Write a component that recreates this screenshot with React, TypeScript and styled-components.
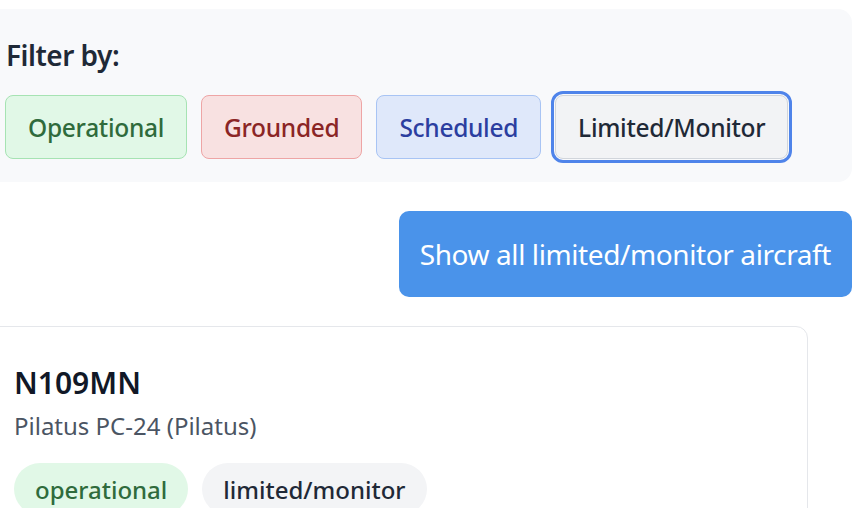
import styled, { createGlobalStyle } from "styled-components"

const GlobalStyle = createGlobalStyle`
    html, body {
        margin: 0;
        padding: 0;
        background: #ffffff;
        overflow: hidden;
    }
    body {
        font-family: "Noto Sans", "Open Sans", sans-serif;
        color: #1f2937;
    }
`

const tones = {
    operational: { bg: "#e1f8e7", border: "#a6e3b3", text: "#2f6b3c" },
    grounded: { bg: "#f8e1e1", border: "#eea5a5", text: "#8b2525" },
    scheduled: { bg: "#dfe8fa", border: "#a8c4f4", text: "#2b3ea0" },
    limited: { bg: "#f2f3f5", border: "#d1d5db", text: "#1f2937" },
}

type Tone = keyof typeof tones

const Page = styled.div`
    width: 867px;
    margin-left: -15px;
    padding-top: 9px;
`

const FilterPanel = styled.section`
    background: #f8f9fb;
    border-radius: 14px;
    padding: 28px 20px 23px;
`

const FilterTitle = styled.h3`
    margin: 0 0 22px 1px;
    font-size: 28px;
    line-height: 36px;
    letter-spacing: -0.5px;
    font-weight: 600;
    color: #1f2937;
`

const FilterRow = styled.div`
    display: flex;
    gap: 14px;
`

const FilterButton = styled.button<{ $tone: Tone; $active?: boolean }>`
    height: 64px;
    padding: 0 22px;
    border-radius: 8px;
    border: 1px solid ${(p) => tones[p.$tone].border};
    background: ${(p) => tones[p.$tone].bg};
    color: ${(p) => tones[p.$tone].text};
    font-family: inherit;
    font-size: 24.5px;
    letter-spacing: -0.3px;
    font-weight: 500;
    outline: ${(p) => (p.$active ? "3px solid #4f84ea" : "none")};
    outline-offset: 1px;
    cursor: pointer;
`

const ActionRow = styled.div`
    display: flex;
    justify-content: flex-end;
    margin-top: 29px;
`

const ActionButton = styled.button`
    height: 86px;
    padding: 0 21px;
    border: none;
    border-radius: 10px;
    background: #4a93ea;
    color: #ffffff;
    font-family: inherit;
    font-size: 28px;
    letter-spacing: -0.4px;
    font-weight: 400;
    cursor: pointer;
`

const AircraftCard = styled.article`
    width: 823px;
    box-sizing: border-box;
    margin-top: 29px;
    border: 1px solid #e5e7eb;
    border-radius: 12px;
    padding: 36px 28px 28px;
`

const TailNumber = styled.h2`
    margin: 0;
    font-size: 30px;
    line-height: 40px;
    font-weight: 600;
    color: #111827;
`

const ModelLine = styled.p`
    margin: 6px 0 0;
    font-size: 24px;
    line-height: 34px;
    color: #4b5563;
`

const BadgeRow = styled.div`
    display: flex;
    gap: 14px;
    margin-top: 20px;
`

const Badge = styled.span<{ $tone: Tone }>`
    display: inline-flex;
    align-items: center;
    height: 52px;
    padding: 0 21px;
    border-radius: 26px;
    background: ${(p) => (p.$tone === "limited" ? "#f3f4f6" : tones[p.$tone].bg)};
    color: ${(p) => tones[p.$tone].text};
    font-size: 24px;
    font-weight: 500;
`

export default function App() {
    const filters: { tone: Tone; label: string }[] = [
        { tone: "operational", label: "Operational" },
        { tone: "grounded", label: "Grounded" },
        { tone: "scheduled", label: "Scheduled" },
        { tone: "limited", label: "Limited/Monitor" },
    ]

    return (
        <>
            <GlobalStyle />
            <Page>
                <FilterPanel>
                    <FilterTitle>Filter by:</FilterTitle>
                    <FilterRow>
                        {filters.map((f) => (
                            <FilterButton key={f.tone} $tone={f.tone} $active={f.tone === "limited"}>
                                {f.label}
                            </FilterButton>
                        ))}
                    </FilterRow>
                </FilterPanel>
                <ActionRow>
                    <ActionButton>Show all limited/monitor aircraft</ActionButton>
                </ActionRow>
                <AircraftCard>
                    <TailNumber>N109MN</TailNumber>
                    <ModelLine>Pilatus PC-24 (Pilatus)</ModelLine>
                    <BadgeRow>
                        <Badge $tone="operational">operational</Badge>
                        <Badge $tone="limited">limited/monitor</Badge>
                    </BadgeRow>
                </AircraftCard>
            </Page>
        </>
    )
}
